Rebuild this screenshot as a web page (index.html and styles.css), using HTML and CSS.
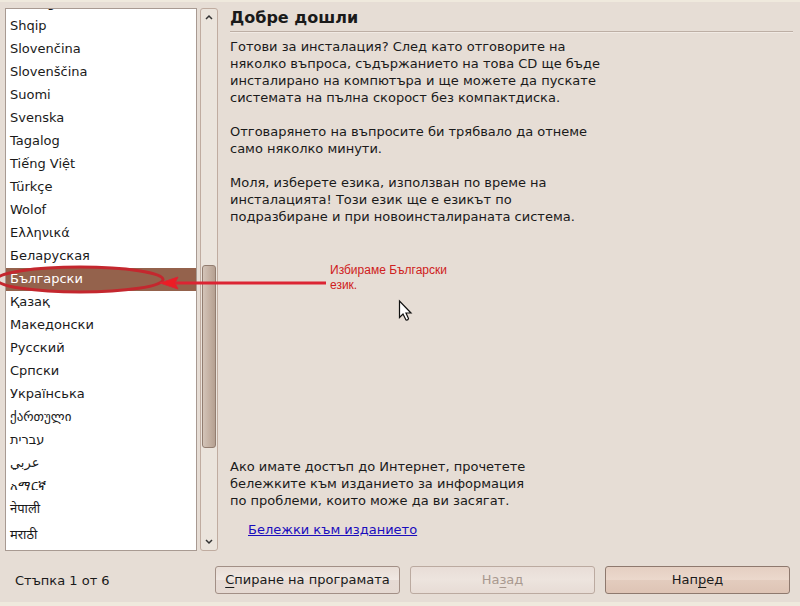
FILE: index.html
```html
<!DOCTYPE html>
<html lang="bg">
<head>
<meta charset="utf-8">
<title>Инсталиране</title>
<link rel="stylesheet" href="styles.css">
</head>
<body>
<div class="window">
  <main class="main">
    <ul class="languages" role="listbox" aria-label="Език">
      <li role="option">Sámegillii</li>
      <li role="option">Shqip</li>
      <li role="option">Slovenčina</li>
      <li role="option">Slovenščina</li>
      <li role="option">Suomi</li>
      <li role="option">Svenska</li>
      <li role="option">Tagalog</li>
      <li role="option">Tiếng Việt</li>
      <li role="option">Türkçe</li>
      <li role="option">Wolof</li>
      <li role="option">Ελληνικά</li>
      <li role="option">Беларуская</li>
      <li role="option" class="selected" aria-selected="true">Български</li>
      <li role="option">Қазақ</li>
      <li role="option">Македонски</li>
      <li role="option">Русский</li>
      <li role="option">Српски</li>
      <li role="option">Українська</li>
      <li role="option">ქართული</li>
      <li role="option">עברית</li>
      <li role="option">عربي</li>
      <li role="option">አማርኛ</li>
      <li role="option" class="tall">नेपाली</li>
      <li role="option" class="tall">मराठी</li>
    </ul>
    <div class="scrollbar">
      <button class="stepper" type="button" aria-label="Нагоре"><svg width="8" height="6" viewBox="0 0 8 6"><path d="M1 5L4 2L7 5"/></svg></button>
      <div class="track"><div class="thumb"></div></div>
      <button class="stepper" type="button" aria-label="Надолу"><svg width="8" height="6" viewBox="0 0 8 6"><path d="M1 1L4 4L7 1"/></svg></button>
    </div>
    <section class="content">
      <h1>Добре дошли</h1>
      <p>Готови за инсталация? След като отговорите на<br>няколко въпроса, съдържанието на това CD ще бъде<br>инсталирано на компютъра и ще можете да пускате<br>системата на пълна скорост без компактдиска.</p>
      <p>Отговарянето на въпросите би трябвало да отнеме<br>само няколко минути.</p>
      <p>Моля, изберете езика, използван по време на<br>инсталацията! Този език ще е езикът по<br>подразбиране и при новоинсталираната система.</p>
      <div class="release">
        <p>Ако имате достъп до Интернет, прочетете<br>бележките към изданието за информация<br>по проблеми, които може да ви засягат.</p>
        <a href="#notes">Бележки към изданието</a>
      </div>
    </section>
  </main>
  <footer class="footer">
    <span>Стъпка 1 от 6</span>
    <button class="button" type="button"><u>С</u>пиране на програмата</button>
    <button class="button" type="button" disabled>На<u>з</u>ад</button>
    <button class="button primary" type="button">Нап<u>р</u>ед</button>
  </footer>
  <svg class="marks" width="460" height="340" viewBox="0 0 460 340" aria-hidden="true">
    <ellipse cx="80" cy="279.500" rx="83" ry="12.500" fill="none" stroke="#c4272e" stroke-width="3"/>
    <path d="M174 283H326" stroke="#dc2433" stroke-width="3"/>
    <path d="M160 283L178 277L175 283L178 289Z" fill="#ed1c24" stroke="#dc2433"/>
    <path d="M399.500 301V317.500L403 314L406 320Q408 320.500 408.500 318.500L406 313H411Z" fill="#fff" stroke="#111" stroke-width="1.200"/>
  </svg>
  <p class="note">Избираме Български<br>език.</p>
</div>
</body>
</html>
```
FILE: styles.css
```css
* {
  box-sizing: border-box;
}

body {
  margin: 0;
  color: #1a1a1a;
  font: 13px/17px "DejaVu Sans", "Noto Sans", sans-serif;
}

.window {
  position: relative;
  display: flex;
  flex-direction: column;
  height: 100vh;
  min-height: 480px;
  overflow: hidden;
  padding: 6px 5px 8px;
  background: #e6ddd5;
  border-top: 2px solid #efe9dd;
  border-bottom: 4px solid #efe9dd;
}

.main {
  display: flex;
  flex: 1;
  min-height: 0;
}

.languages {
  display: flex;
  flex: 0 0 192px;
  flex-direction: column;
  justify-content: flex-end;
  margin: 0;
  padding: 0;
  overflow: hidden;
  list-style: none;
  background: #fff;
  border: 1px solid #a89a92;
}

.languages li {
  flex: none;
  height: 23px;
  padding: 0 4px;
  line-height: 21px;
}

.languages .tall {
  height: 26px;
}

.languages .selected {
  color: #fff;
  background: #94624c;
}

.scrollbar {
  display: flex;
  flex: 0 0 18px;
  flex-direction: column;
  margin: 0 12px 0 3px;
  background: #ebe4dc;
  border: 1px solid #c0aca0;
  border-radius: 3px;
}

.stepper {
  display: flex;
  align-items: center;
  justify-content: center;
  height: 16px;
  padding: 0;
  background: none;
  border: 0;
}

.stepper path {
  fill: none;
  stroke: #333;
  stroke-width: 1.5;
}

.track {
  display: flex;
  flex: 1;
  flex-direction: column;
  justify-content: flex-end;
  padding: 0 1px 86px;
}

.thumb {
  flex: 0 0 183px;
  background: linear-gradient(90deg, #d3c4b8, #c5b2a4 50%, #b5a091);
  border: 1px solid #927d70;
  border-radius: 3px;
}

.content {
  display: flex;
  flex: 1;
  flex-direction: column;
  margin-right: 2px;
}

h1 {
  margin: 0 0 6px;
  padding-bottom: 4px;
  font-size: 16px;
  line-height: 19px;
  border-bottom: 1px solid #bdafa5;
  box-shadow: 0 1px #f1eae4;
}

p {
  margin: 0 0 17px;
}

.release {
  margin-top: auto;
  padding-bottom: 13px;
}

.release p {
  margin-bottom: 12px;
}

.release a {
  margin-left: 18px;
  color: #1a0dbd;
}

.footer {
  display: grid;
  grid-template-columns: 190px 1fr 1fr 1fr;
  gap: 10px;
  align-items: center;
  padding: 15px 5px 0 10px;
}

.button {
  height: 28px;
  padding: 0 4px 2px;
  color: #1a1a1a;
  font: inherit;
  white-space: nowrap;
  background: linear-gradient(#e8ddd6, #f0e8e3 48%, #e6dad4 50%, #e5d9d2);
  border: 1px solid #a28f86;
  border-radius: 3px;
}

.button:disabled {
  color: #a9998f;
  background: linear-gradient(#e8ddd7, #ede4de 48%, #e7dcd5);
  border-color: #bbaaa0;
}

.button.primary {
  background: linear-gradient(#e5cfc2, #ebd8cc 48%, #e3ccbe 50%, #dec4b5);
  border-color: #8e796e;
}

.button u {
  text-decoration-skip-ink: none;
  text-underline-offset: 3px;
}

.marks {
  position: absolute;
  top: -2px;
  left: 0;
  pointer-events: none;
}

.note {
  position: absolute;
  top: 261px;
  left: 330px;
  margin: 0;
  color: #cf2020;
  font: 12px/15px "Liberation Sans", sans-serif;
}
```
